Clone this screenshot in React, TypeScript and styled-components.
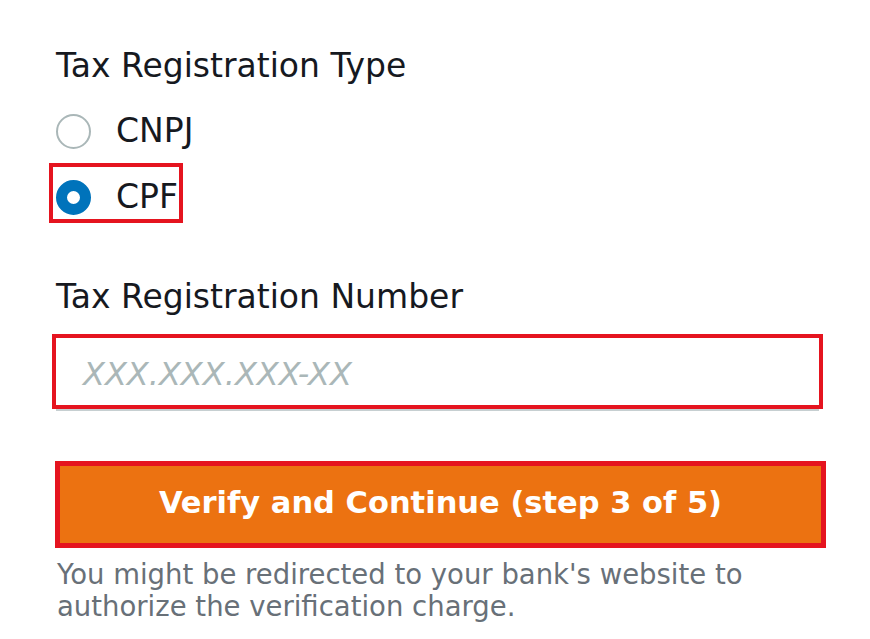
import React from "react";
import styled, { createGlobalStyle } from "styled-components";

const FONT = `"DejaVu Sans", "Noto Sans", "Liberation Sans", sans-serif`;

const GlobalStyle = createGlobalStyle`
  html, body { margin: 0; padding: 0; background: #ffffff; }
  body { font-family: ${FONT}; color: #16191f; }
  * { box-sizing: border-box; }
`;

const Page = styled.div`
  display: flex;
  flex-direction: column;
  padding: 48px 0 0 56px;
  width: 870px;
`;

const FieldLabel = styled.div<{ $mt?: number }>`
  font-size: 33px;
  line-height: 36px;
  color: #16191f;
  margin-top: ${(p) => p.$mt ?? 0}px;
`;

const RadioGroup = styled.div`
  display: flex;
  flex-direction: column;
  align-items: flex-start;
  gap: 6px;
  margin-top: 13px;
  margin-left: -7px;
`;

const Option = styled.label<{ $highlight?: boolean }>`
  display: flex;
  align-items: center;
  gap: 25px;
  padding: 12px 1px 4px 3px;
  border: 4px solid ${(p) => (p.$highlight ? "#e5141f" : "transparent")};
  font-size: 33px;
  line-height: 36px;
  color: #16191f;
`;

const Circle = styled.span<{ $checked?: boolean }>`
  width: 35px;
  height: 35px;
  border-radius: 50%;
  flex: none;
  background: #ffffff;
  border: ${(p) => (p.$checked ? "11px solid #0073bb" : "2.5px solid #aab7b8")};
`;

const InputBox = styled.div`
  margin-top: 19px;
  margin-left: -4px;
  width: 771px;
  height: 75px;
  border: 4px solid #e5141f;
  display: flex;
  align-items: center;
  padding: 5px 0 0 27px;
  box-shadow: 0 6px 0 -4px #c6cfd1;
  background: #fff;
`;

const Placeholder = styled.span`
  font-size: 32px;
  font-style: italic;
  color: #aab7b8;
  line-height: 36px;
`;

const PrimaryButton = styled.button`
  margin-top: 52px;
  margin-left: -1px;
  width: 771px;
  height: 87px;
  border: 5px solid #e5141f;
  background: #ec7211;
  color: #ffffff;
  font-family: ${FONT};
  font-weight: 700;
  font-size: 30.5px;
  line-height: 36px;
  display: flex;
  align-items: center;
  justify-content: center;
  padding: 0 0 4px;
`;

const Hint = styled.p`
  margin: 10px 0 0 1px;
  font-size: 27.5px;
  line-height: 32px;
  color: #687078;
  width: 780px;
`;

export default function App() {
  return (
    <>
      <GlobalStyle />
      <Page>
        <FieldLabel>Tax Registration Type</FieldLabel>
        <RadioGroup>
          <Option>
            <Circle />
            CNPJ
          </Option>
          <Option $highlight>
            <Circle $checked />
            CPF
          </Option>
        </RadioGroup>
        <FieldLabel $mt={56}>Tax Registration Number</FieldLabel>
        <InputBox>
          <Placeholder>XXX.XXX.XXX-XX</Placeholder>
        </InputBox>
        <PrimaryButton>Verify and Continue (step 3 of 5)</PrimaryButton>
        <Hint>
          You might be redirected to your bank's website to
          <br />
          authorize the verification charge.
        </Hint>
      </Page>
    </>
  );
}
